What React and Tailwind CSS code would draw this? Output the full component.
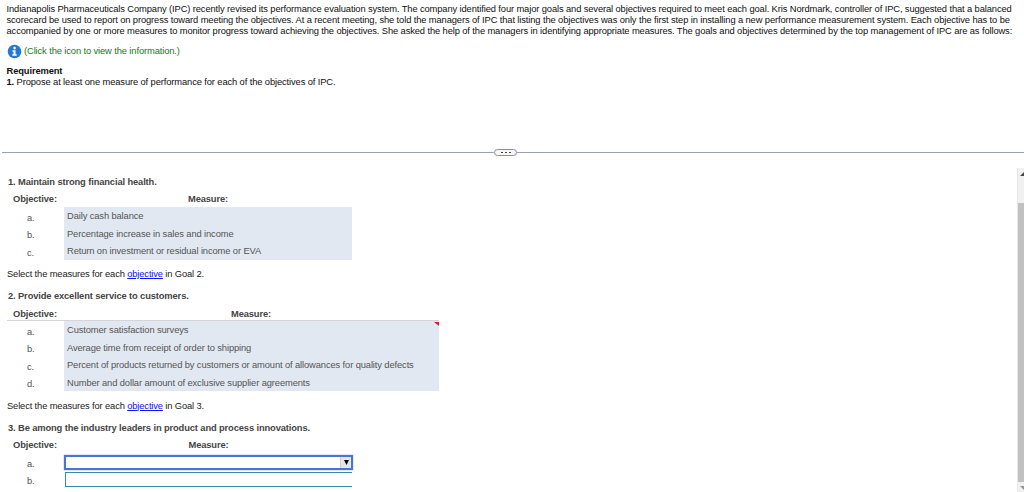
const introLines = [
  "Indianapolis Pharmaceuticals Company (IPC) recently revised its performance evaluation system. The company identified four major goals and several objectives required to meet each goal. Kris Nordmark, controller of IPC, suggested that a balanced",
  "scorecard be used to report on progress toward meeting the objectives. At a recent meeting, she told the managers of IPC that listing the objectives was only the first step in installing a new performance measurement system. Each objective has to be",
  "accompanied by one or more measures to monitor progress toward achieving the objectives. She asked the help of the managers in identifying appropriate measures. The goals and objectives determined by the top management of IPC are as follows:",
];

const financial = [
  "Daily cash balance",
  "Percentage increase in sales and income",
  "Return on investment or residual income or EVA",
];

const service = [
  "Customer satisfaction surveys",
  "Average time from receipt of order to shipping",
  "Percent of products returned by customers or amount of allowances for quality defects",
  "Number and dollar amount of exclusive supplier agreements",
];

const letters = ["a.", "b.", "c.", "d."];

function GoalHeader({ title, titleClass = "h-[17px]", rowClass, columnClass }) {
  return (
    <div className="font-bold tracking-[-0.125px] text-[#454545]">
      <h2 className={`pl-[1px] leading-[17px] whitespace-nowrap ${titleClass}`}>{title}</h2>
      <div className={`flex pl-[6px] leading-[17px] ${rowClass}`}>
        <span className="w-[51px]">Objective:</span>
        <span className={`text-center ${columnClass}`}>Measure:</span>
      </div>
    </div>
  );
}

function MeasureRow({ letter, children }) {
  return (
    <div className="flex h-[17.5px] text-[#555]">
      <span className="w-[57px] pl-[20px] pt-[1.5px] leading-[18px]">{letter}</span>
      <span className="flex-1 whitespace-nowrap bg-[#e2e8f2] pl-[3px] leading-[18px]">{children}</span>
    </div>
  );
}

function SelectLine({ goal }) {
  return (
    <p className="leading-[12px] tracking-[-0.135px] text-[#222]">
      Select the measures for each{" "}
      <a href="#" className="text-[#1010ff] underline">objective</a> in Goal {goal}.
    </p>
  );
}

export default function App() {
  return (
    <div className="flex h-[492px] w-[1024px] flex-col overflow-hidden bg-white font-['Liberation_Sans',Arial,sans-serif] text-[9.35px] tracking-[-0.113px]">
      <section className="h-[148px] pl-[6.5px] pt-[4px] text-[#111]">
        {introLines.map((line) => (
          <p key={line} className="h-[11.1px] whitespace-nowrap leading-[11.1px]">{line}</p>
        ))}
        <div className="mt-[6.7px] flex h-[15px] items-center gap-[2px] pl-[0.5px] text-[#108010]">
          <svg width="15" height="15" viewBox="0 0 15 15">
            <circle cx="7.5" cy="7.5" r="6.8" fill="#2479d5" />
            <circle cx="7.6" cy="4.1" r="1.3" fill="white" />
            <path d="M5.5 6.3h3v4h1.2v1.4H5.3v-1.4h1.2V7.7h-1z" fill="white" />
          </svg>
          <span>(Click the icon to view the information.)</span>
        </div>
        <h1 className="mt-[7px] h-[11px] font-bold leading-[11px]">Requirement</h1>
        <p className="leading-[11px]">
          <b>1.</b> Propose at least one measure of performance for each of the objectives of IPC.
        </p>
      </section>

      <div className="flex h-[8px] items-center pl-[2px]">
        <div className="h-px w-[492px] bg-[#9a9fbb]" />
        <div className="flex h-[7px] w-[23px] items-center justify-center gap-[2px] rounded-[4px] border border-[#878da5] bg-[#f7f7f7]">
          <i className="h-px w-[2px] bg-[#444]" />
          <i className="h-px w-[2px] bg-[#444]" />
          <i className="h-px w-[2px] bg-[#444]" />
        </div>
        <div className="h-px flex-1 bg-[#9a9fbb]" />
      </div>

      <main className="flex flex-1">
        <div className="flex-1 pl-[7px] pt-[18px]">
          <section className="w-[345px]">
            <GoalHeader title="1. Maintain strong financial health." rowClass="h-[16px]" columnClass="w-[288px]" />
            {financial.map((text, i) => (
              <MeasureRow key={text} letter={letters[i]}>{text}</MeasureRow>
            ))}
          </section>
          <div className="pt-[8.5px]">
            <SelectLine goal={2} />
          </div>
          <section className="w-[431.6px] pt-[7.5px]">
            <GoalHeader
              title="2. Provide excellent service to customers."
              titleClass="h-[18px]"
              rowClass="h-[14.5px]"
              columnClass="w-[374px]"
            />
            <div className="relative border-t border-[#d5d5d5]">
              {service.map((text, i) => (
                <MeasureRow key={text} letter={letters[i]}>{text}</MeasureRow>
              ))}
              <svg className="absolute right-0 top-[1px]" width="5" height="4">
                <path d="M0 0H5V4Z" fill="#d51f29" />
              </svg>
            </div>
          </section>
          <div className="pt-[8.5px]">
            <SelectLine goal={3} />
          </div>
          <section className="w-[346px] pt-[8px]">
            <GoalHeader
              title="3. Be among the industry leaders in product and process innovations."
              titleClass="h-[17.5px]"
              rowClass="h-[18px]"
              columnClass="w-[289px]"
            />
            <div className="flex h-[17px] text-[#555]">
              <span className="w-[57px] pl-[20px] leading-[18px]">a.</span>
              <div className="flex h-[15px] flex-1 justify-end border-2 border-[#4776d5] bg-white shadow-[0_0_1px_#4776d5]">
                <button className="flex w-[11px] items-center justify-center border-l border-[#ccc] bg-[#e5e5e5]">
                  <svg width="5" height="5" viewBox="0 0 5 5">
                    <path d="M0 0H5L2.5 5Z" fill="black" />
                  </svg>
                </button>
              </div>
            </div>
            <div className="flex h-[16px] text-[#555]">
              <span className="w-[58px] pl-[20px] leading-[18px]">b.</span>
              <div className="mr-[1px] h-[15px] flex-1 border-y border-l border-[#388ba5]" />
            </div>
          </section>
        </div>
        <aside className="mt-[12px] flex w-[7px] flex-col border-l border-[#e8e8e8] bg-[#f1f1f1]">
          <svg className="h-[35px]" width="6" height="35">
            <path d="M2 8L6 4V8Z" fill="#454545" />
          </svg>
          <div className="flex-1 bg-[#c1c1c1]" />
          <svg width="6" height="10">
            <path d="M2 4H6V8Z" fill="#959595" />
          </svg>
        </aside>
      </main>
    </div>
  );
}
